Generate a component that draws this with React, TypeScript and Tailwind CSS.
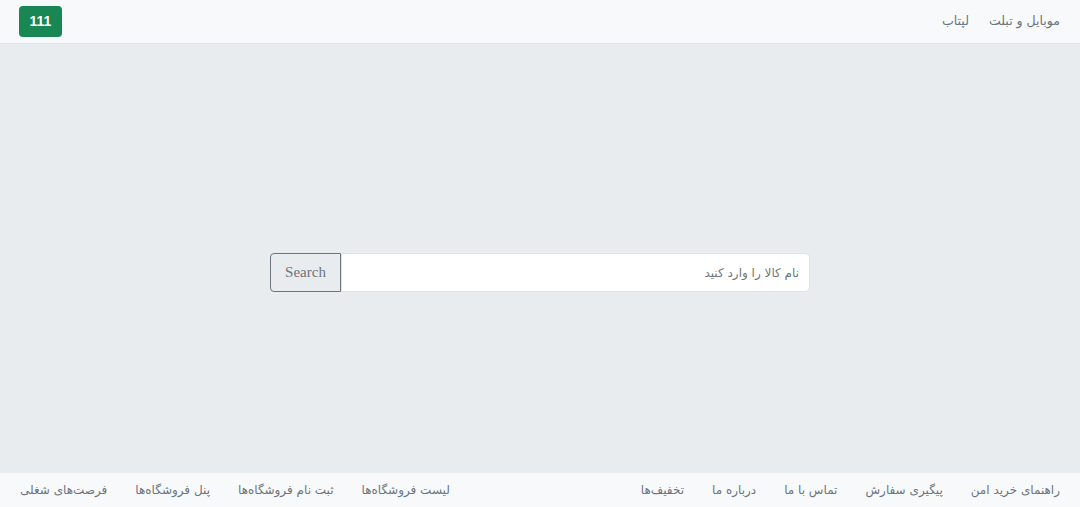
import React from 'react'

const topLinks = ['موبایل و تبلت', 'لپتاب']
const footRight = ['راهنمای خرید امن', 'پیگیری سفارش', 'تماس با ما', 'درباره ما', 'تخفیف‌ها']
const footLeft = ['لیست فروشگاه‌ها', 'ثبت نام فروشگاه‌ها', 'پنل فروشگاه‌ها', 'فرصت‌های شغلی']

export default function App() {
  return (
    <div
      dir="rtl"
      className="flex h-[507px] flex-col bg-[#e9ecef] text-[#6c757d]"
      style={{ fontFamily: '"DejaVu Sans", "Noto Sans", sans-serif' }}
    >
      {/* header */}
      <header className="flex h-[44px] items-center justify-between border-b border-[#dee2e6] bg-[#f8f9fa] pr-[20px] pl-[19px]">
        <nav className="flex gap-[20px] text-[12.5px] text-[#6c757d]">
          {topLinks.map(l => (
            <a key={l}>{l}</a>
          ))}
        </nav>
        <button
          className="h-[31px] w-[43px] rounded-[4px] bg-[#198754] text-[14px] font-semibold text-white"
          style={{ fontFamily: '"Liberation Sans", sans-serif' }}
        >
          111
        </button>
      </header>

      {/* search */}
      <main className="flex flex-1 items-center justify-center pt-[28px]">
        <div className="flex h-[39px] w-[540px]">
          <input
            placeholder="نام کالا را وارد کنید"
            className="flex-1 rounded-r-[5px] border border-[#dee2e6] bg-white px-[10px] text-[12px] outline-none placeholder:text-[#6c757d]"
          />
          <button
            dir="ltr"
            className="w-[71px] rounded-l-[4px] border border-[#6c757d] bg-[#e9ecef] text-[15px] text-[#6c757d]"
            style={{ fontFamily: '"Liberation Serif", serif' }}
          >
            Search
          </button>
        </div>
      </main>

      {/* footer */}
      <footer className="flex h-[34px] items-center justify-between bg-[#f8f9fa] px-[20px] text-[12px]">
        <nav className="flex gap-[28px]">
          {footRight.map(l => (
            <a key={l}>{l}</a>
          ))}
        </nav>
        <nav className="flex gap-[28px]">
          {footLeft.map(l => (
            <a key={l}>{l}</a>
          ))}
        </nav>
      </footer>
    </div>
  )
}
